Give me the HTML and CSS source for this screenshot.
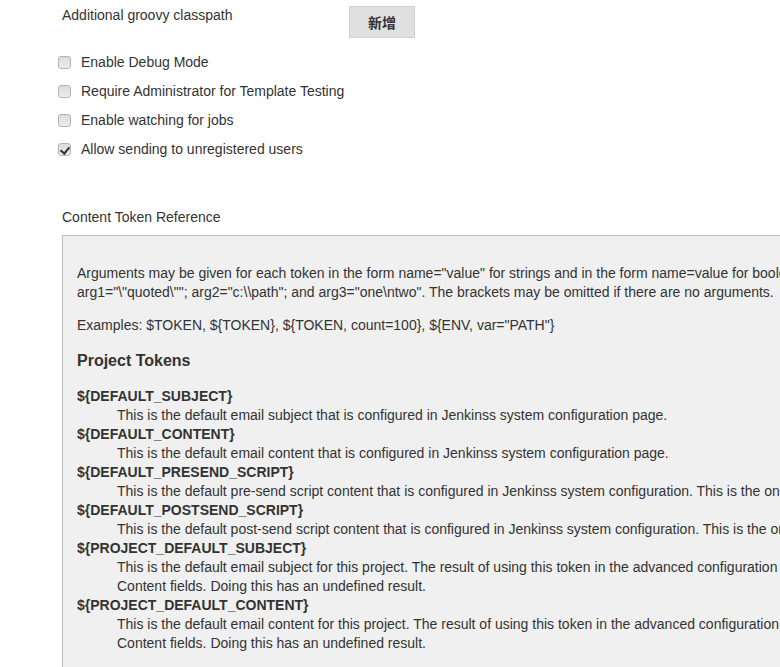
FILE: index.html
```html
<!DOCTYPE html>
<html>
<head>
<meta charset="utf-8">
<link rel="stylesheet" href="styles.css">
</head>
<body>
<div class="page">
  <div class="setting-row">
    <div class="setting-name">Additional groovy classpath</div>
    <button class="btn" type="button">新增</button>
  </div>

  <div class="checks">
    <label class="check"><input type="checkbox" class="cb"><span>Enable Debug Mode</span></label>
    <label class="check"><input type="checkbox" class="cb"><span>Require Administrator for Template Testing</span></label>
    <label class="check"><input type="checkbox" class="cb"><span>Enable watching for jobs</span></label>
    <label class="check"><input type="checkbox" class="cb" checked><span>Allow sending to unregistered users</span></label>
  </div>

  <div class="section-title">Content Token Reference</div>

  <div class="help">
    <p>Arguments may be given for each token in the form name="value" for strings and in the form name=value for booleans and numbers. In string arguments, escape ", \, and line terminators ('\n' or '\r\n') with a \, e.g.<br>arg1="\"quoted\""; arg2="c:\\path"; and arg3="one\ntwo". The brackets may be omitted if there are no arguments.</p>
    <p>Examples: $TOKEN, ${TOKEN}, ${TOKEN, count=100}, ${ENV, var="PATH"}</p>
    <h3>Project Tokens</h3>
    <dl>
      <dt>${DEFAULT_SUBJECT}</dt>
      <dd>This is the default email subject that is configured in Jenkinss system configuration page.</dd>
      <dt>${DEFAULT_CONTENT}</dt>
      <dd>This is the default email content that is configured in Jenkinss system configuration page.</dd>
      <dt>${DEFAULT_PRESEND_SCRIPT}</dt>
      <dd>This is the default pre-send script content that is configured in Jenkinss system configuration. This is the only token supported in the pre-send script field.</dd>
      <dt>${DEFAULT_POSTSEND_SCRIPT}</dt>
      <dd>This is the default post-send script content that is configured in Jenkinss system configuration. This is the only token supported in the post-send script field.</dd>
      <dt>${PROJECT_DEFAULT_SUBJECT}</dt>
      <dd>This is the default email subject for this project. The result of using this token in the advanced configuration is what is in the Default Subject or Default<br>Content fields. Doing this has an undefined result.</dd>
      <dt>${PROJECT_DEFAULT_CONTENT}</dt>
      <dd>This is the default email content for this project. The result of using this token in the advanced configuration is what is in the Default Subject or Default<br>Content fields. Doing this has an undefined result.</dd>
    </dl>
  </div>
</div>
</body>
</html>
```

FILE: styles.css
```css
html, body {
  margin: 0;
  padding: 0;
  background: #fff;
  overflow: hidden;
}

body {
  font-family: "Liberation Sans", Arial, sans-serif;
  font-size: 14px;
  line-height: 19px;
  color: #333;
}

.page {
  padding: 6px 0 0 62px;
  width: 1600px;
}

.setting-row {
  display: flex;
  align-items: flex-start;
}

.setting-name {
  width: 287px;
  padding-top: 0;
}

.btn {
  width: 66px;
  height: 32px;
  margin: 0;
  padding: 0;
  background: #e0e0e0;
  border: 1px solid #cfcfcf;
  border-radius: 0;
  font-family: "Noto Sans CJK SC", "Liberation Sans", sans-serif;
  font-size: 14px;
  font-weight: 600;
  color: #333;
}

.checks {
  display: flex;
  flex-direction: column;
  margin: 10px 0 0 -4px;
}

.check {
  display: flex;
  align-items: center;
  height: 29px;
}

.cb {
  appearance: none;
  -webkit-appearance: none;
  width: 13px;
  height: 13px;
  margin: 0 10px 0 0;
  border: 1px solid #b4b4b4;
  border-radius: 3px;
  background: linear-gradient(#dcdcdc, #ececec);
  position: relative;
  flex: none;
}

.cb:checked::after {
  content: "";
  position: absolute;
  left: 3px;
  top: 1px;
  width: 4px;
  height: 7px;
  border: solid #333;
  border-width: 0 2px 2px 0;
  transform: rotate(40deg);
}

.section-title {
  margin-top: 44px;
}

.help {
  margin-top: 8px;
  background: #f0f0f0;
  border-top: 1px solid #bbb;
  border-left: 1px solid #bbb;
  padding: 14px 0 20px 14px;
  white-space: nowrap;
}

.help p {
  margin: 14px 0;
}

.help h3 {
  margin: 16px 0 17px;
  font-size: 16px;
  line-height: 19px;
  font-weight: bold;
}

.help dl {
  margin: 0;
}

.help dt {
  font-weight: bold;
}

.help dd {
  margin: 0 0 0 40px;
}
```
